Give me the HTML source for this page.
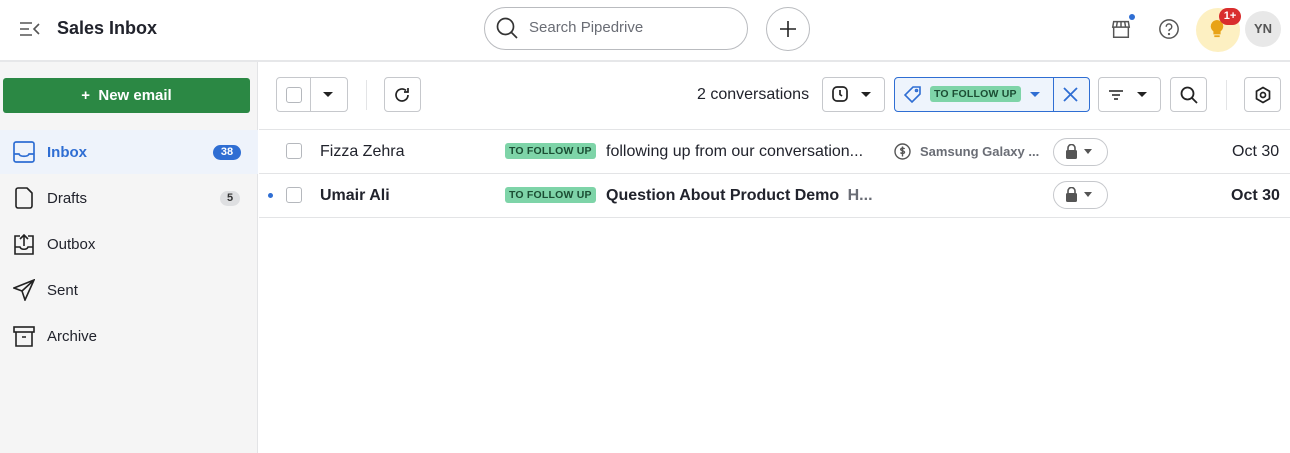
<!DOCTYPE html><html><head><style>
*{box-sizing:border-box;margin:0;padding:0}
body{width:1290px;height:453px;background:#fff;font-family:"Liberation Sans",sans-serif;color:#21232c;position:relative;overflow:hidden;font-size:16px}
.a{position:absolute}
.btn{position:absolute;border:1px solid #c6c8cc;border-radius:4px;background:#fff;height:35px;top:77px}
.nav{position:absolute;left:0;width:258px;height:44px;display:flex;align-items:center}
.nav span.t{position:absolute;left:47px;font-size:15px}
.nav svg{position:absolute;left:13px}
.tag{position:absolute;background:#7ed4a8;color:#1b4d33;font-size:10.5px;font-weight:bold;padding:2px 4px;border-radius:3px;letter-spacing:.2px}
.cb{position:absolute;width:16px;height:16px;border:1.5px solid #b5b8bd;border-radius:3px;background:#fff}
.lock{position:absolute;width:55px;height:28px;border:1px solid #c6c8cc;border-radius:14px}
</style></head><body>
<svg class="a" style="left:19px;top:20px" width="22" height="18" viewBox="0 0 22 18" fill="none" stroke="#555" stroke-width="1.6"><path d="M1 3h12M1 9h9M1 15h12M20 4l-5 5 5 5"/></svg>
<div class="a" style="left:57px;top:18px;font-size:18px;font-weight:bold">Sales Inbox</div>
<div class="a" style="left:484px;top:7px;width:264px;height:43px;border:1px solid #b9bbbf;border-radius:22px"></div>
<svg class="a" style="left:496px;top:17px" width="22" height="22" viewBox="0 0 22 22" fill="none" stroke="#333" stroke-width="1.7"><circle cx="9.5" cy="9.5" r="8"/><path d="M15.5 15.5l5.5 5.5"/></svg>
<div class="a" style="left:529px;top:19px;font-size:15px;color:#6a6d75">Search Pipedrive</div>
<div class="a" style="left:766px;top:7px;width:44px;height:44px;border:1px solid #b9bbbf;border-radius:50%"></div>
<svg class="a" style="left:779px;top:20px" width="18" height="18" viewBox="0 0 18 18" stroke="#222" stroke-width="1.6"><path d="M9 1v16M1 9h16"/></svg>
<svg class="a" style="left:1110px;top:18px" width="22" height="22" viewBox="0 0 24 24" fill="none" stroke="#555" stroke-width="1.6"><path d="M4 4h16l1 6H3zM4 10v11h16V10M8 4l-1 6M16 4l1 6M12 4v6"/></svg>
<div class="a" style="left:1129px;top:14px;width:6px;height:6px;border-radius:50%;background:#2f6ed3"></div>
<svg class="a" style="left:1158px;top:18px" width="22" height="22" viewBox="0 0 24 24" fill="none" stroke="#555" stroke-width="1.6"><circle cx="12" cy="12" r="10"/><path d="M9 9.5a3 3 0 1 1 4 2.8c-.8.4-1 1-1 2"/><circle cx="12" cy="17.5" r=".5" fill="#555"/></svg>
<div class="a" style="left:1196px;top:8px;width:44px;height:44px;border-radius:50%;background:#fdf0c2"></div>
<svg class="a" style="left:1208px;top:18px" width="18" height="22" viewBox="0 0 20 24"><path d="M10 2a7 7 0 0 0-4 12.7V18h8v-3.3A7 7 0 0 0 10 2z" fill="#e8a317"/><rect x="7" y="19" width="6" height="2" fill="#e8a317"/></svg>
<div class="a" style="left:1219px;top:8px;width:22px;height:17px;border-radius:9px;background:#d92d2d;color:#fff;font-size:11px;font-weight:bold;text-align:center;line-height:17px">1+</div>
<div class="a" style="left:1245px;top:11px;width:36px;height:36px;border-radius:50%;background:#e8e8e8;color:#555;font-size:13px;font-weight:bold;text-align:center;line-height:36px">YN</div>
<div class="a" style="left:0;top:60px;width:1290px;height:2px;background:#e6e7e9"></div>
<div class="a" style="left:0;top:62px;width:258px;height:391px;background:#f5f5f5;border-right:1px solid #e3e4e6"></div>
<div class="a" style="left:3px;top:78px;width:247px;height:35px;background:#2b8844;border-radius:3px;color:#fff;font-weight:bold;font-size:15px;text-align:center;line-height:35px">+&nbsp;&nbsp;New email</div>
<div class="nav" style="top:130px;background:#eef3fb"><svg width="22" height="22" viewBox="0 0 22 22" fill="none" stroke="#2f6ed3" stroke-width="1.7"><rect x="1" y="1" width="20" height="20" rx="2"/><path d="M1 13h5c1 3 9 3 10 0h5"/></svg><span class="t" style="color:#2f6ed3;font-weight:bold">Inbox</span><span class="a" style="left:213px;top:15px;width:28px;height:15px;border-radius:8px;background:#2f6ed3;color:#fff;font-size:11px;font-weight:bold;text-align:center;line-height:15px">38</span></div>
<div class="nav" style="top:176px"><svg width="22" height="22" viewBox="0 0 22 22" fill="none" stroke="#222" stroke-width="1.6" stroke-linejoin="round"><path d="M5 1h9l5 5v13a2 2 0 0 1-2 2H5a2 2 0 0 1-2-2V3a2 2 0 0 1 2-2z"/></svg><span class="t">Drafts</span><span class="a" style="left:220px;top:15px;width:20px;height:15px;border-radius:8px;background:#dedfe1;color:#333;font-size:11px;font-weight:bold;text-align:center;line-height:15px">5</span></div>
<div class="nav" style="top:222px"><svg width="22" height="22" viewBox="0 0 22 22" fill="none" stroke="#222" stroke-width="1.6"><path d="M7 3H2v18h18V3h-5M2 14h5c1 3 7 3 8 0h5M11 13V2M7 6l4-4 4 4"/></svg><span class="t">Outbox</span></div>
<div class="nav" style="top:268px"><svg width="22" height="22" viewBox="0 0 22 22" fill="none" stroke="#222" stroke-width="1.6"><path d="M21 1L1 9l8 3 3 9zM9 12l12-11"/></svg><span class="t">Sent</span></div>
<div class="nav" style="top:314px"><svg width="22" height="22" viewBox="0 0 22 22" fill="none" stroke="#222" stroke-width="1.6"><rect x="1" y="2" width="20" height="5"/><path d="M3 7v14h16V7M9 12h4"/></svg><span class="t">Archive</span></div>
<div class="btn" style="left:276px;width:72px"></div>
<div class="a" style="left:310px;top:78px;width:1px;height:33px;background:#c6c8cc"></div>
<div class="cb" style="left:286px;top:87px;width:16px"></div>
<div class="a" style="left:323px;top:92px;border:5px solid transparent;border-top:5px solid #222"></div>
<div class="a" style="left:366px;top:80px;width:1px;height:30px;background:#e3e4e6"></div>
<div class="btn" style="left:384px;width:37px"></div>
<svg class="a" style="left:393px;top:86px" width="18" height="18" viewBox="0 0 18 18" fill="none" stroke="#222" stroke-width="1.7"><path d="M15 9a6 6 0 1 1-2-4.5M15 2v4h-4"/></svg>
<div class="a" style="left:697px;top:86px">2 conversations</div>
<div class="btn" style="left:822px;width:63px"></div>
<svg class="a" style="left:832px;top:86px" width="16" height="16" viewBox="0 0 16 16" fill="none" stroke="#222" stroke-width="1.7"><rect x="1" y="1" width="14" height="14" rx="4"/><path d="M8 4v4.5l2 1.5"/></svg>
<div class="a" style="left:861px;top:92px;border:5px solid transparent;border-top:5px solid #222"></div>
<div class="btn" style="left:894px;width:196px;background:#eef4fc;border-color:#2f6ed3"></div>
<div class="a" style="left:1053px;top:78px;width:1px;height:33px;background:#2f6ed3"></div>
<svg class="a" style="left:904px;top:86px" width="17" height="17" viewBox="0 0 17 17" fill="none" stroke="#2f6ed3" stroke-width="1.6"><path d="M9 1h7v7l-8 8-7-7z"/><circle cx="12.5" cy="4.5" r="1"/></svg>
<div class="tag" style="left:930px;top:86px">TO FOLLOW UP</div>
<div class="a" style="left:1030px;top:92px;border:5px solid transparent;border-top:5px solid #2f6ed3"></div>
<svg class="a" style="left:1063px;top:87px" width="15" height="15" viewBox="0 0 15 15" stroke="#2f6ed3" stroke-width="1.8"><path d="M1 1l13 13M14 1L1 14"/></svg>
<div class="btn" style="left:1098px;width:63px"></div>
<svg class="a" style="left:1108px;top:88px" width="16" height="14" viewBox="0 0 16 14" stroke="#222" stroke-width="1.5"><path d="M1 3h14M4 7h8M6 11h4"/></svg>
<div class="a" style="left:1137px;top:92px;border:5px solid transparent;border-top:5px solid #222"></div>
<div class="btn" style="left:1170px;width:37px"></div>
<svg class="a" style="left:1180px;top:86px" width="18" height="18" viewBox="0 0 18 18" fill="none" stroke="#222" stroke-width="1.8"><circle cx="7.5" cy="7.5" r="6"/><path d="M12 12l5 5"/></svg>
<div class="a" style="left:1226px;top:80px;width:1px;height:30px;background:#e3e4e6"></div>
<div class="btn" style="left:1244px;width:37px"></div>
<svg class="a" style="left:1254px;top:86px" width="18" height="18" viewBox="0 0 18 18" fill="none" stroke="#222" stroke-width="1.7"><path d="M9 1.5l6.5 3.75v7.5L9 16.5l-6.5-3.75v-7.5z"/><circle cx="9" cy="9" r="2.5"/></svg>
<div class="a" style="left:259px;top:129px;width:1031px;height:1px;background:#e3e4e6"></div>
<div class="a" style="left:259px;top:173px;width:1031px;height:1px;background:#e3e4e6"></div>
<div class="a" style="left:259px;top:217px;width:1031px;height:1px;background:#e3e4e6"></div>
<div class="cb" style="left:286px;top:143px"></div>
<div class="a" style="left:320px;top:143px">Fizza Zehra</div>
<div class="tag" style="left:505px;top:143px">TO FOLLOW UP</div>
<div class="a" style="left:606px;top:143px">following up from our conversation...</div>
<svg class="a" style="left:894px;top:143px" width="17" height="17" viewBox="0 0 17 17" fill="none" stroke="#555" stroke-width="1.4"><circle cx="8.5" cy="8.5" r="7.5"/><path d="M10.5 6c-.5-1-3.5-1.3-3.8.3-.3 1.8 4 1.1 3.8 3-.2 1.5-3.3 1.4-4 .2M8.5 3.5v10"/></svg>
<div class="a" style="left:920px;top:144px;font-size:13px;font-weight:bold;color:#6a6d75">Samsung Galaxy ...</div>
<div class="lock" style="left:1053px;top:138px"></div>
<div class="lock" style="left:1053px;top:181px"></div>
<svg class="a" style="left:1065px;top:144px" width="13" height="15" viewBox="0 0 13 15"><path d="M3 6V4a3.5 3.5 0 0 1 7 0v2" fill="none" stroke="#555" stroke-width="1.6"/><rect x="1" y="6" width="11" height="9" rx="1.5" fill="#555"/></svg>
<div class="a" style="left:1084px;top:149px;border:4.5px solid transparent;border-top:5px solid #555"></div>
<svg class="a" style="left:1065px;top:187px" width="13" height="15" viewBox="0 0 13 15"><path d="M3 6V4a3.5 3.5 0 0 1 7 0v2" fill="none" stroke="#555" stroke-width="1.6"/><rect x="1" y="6" width="11" height="9" rx="1.5" fill="#555"/></svg>
<div class="a" style="left:1084px;top:192px;border:4.5px solid transparent;border-top:5px solid #555"></div>
<div class="a" style="left:1232px;top:143px">Oct 30</div>
<div class="a" style="left:268px;top:193px;width:5px;height:5px;border-radius:50%;background:#2f6ed3"></div>
<div class="cb" style="left:286px;top:187px"></div>
<div class="a" style="left:320px;top:187px;font-weight:bold">Umair Ali</div>
<div class="tag" style="left:505px;top:187px">TO FOLLOW UP</div>
<div class="a" style="left:606px;top:187px;font-weight:bold">Question About Product Demo <span style="color:#6a6d75;margin-left:4px">H...</span></div>
<div class="a" style="left:1231px;top:187px;font-weight:bold">Oct 30</div>
</body></html>
